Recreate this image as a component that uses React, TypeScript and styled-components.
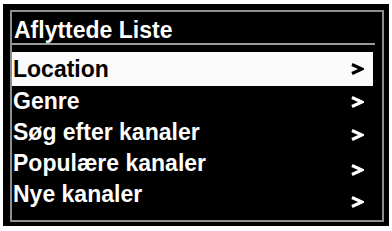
import React from 'react';
import styled, { createGlobalStyle } from 'styled-components';

const GlobalStyle = createGlobalStyle`
  html, body {
    margin: 0;
    padding: 0;
    background: #ffffff;
  }
  body {
    font-family: "Liberation Sans", Arial, sans-serif;
  }
`;

const Screen = styled.div`
  box-sizing: border-box;
  width: 386px;
  height: 222px;
  margin: 4px 0 0 3px;
  padding: 6px 5px 4px 7px;
  background: #000;
`;

const Panel = styled.div`
  box-sizing: border-box;
  height: 100%;
  border: 2px solid #8e8e8e;
  display: flex;
  flex-direction: column;
`;

const Header = styled.div`
  box-sizing: border-box;
  height: 30px;
  padding: 3px 0 0 2px;
  display: flex;
  align-items: flex-end;
  color: #fff;
  font-size: 23px;
  font-weight: bold;
  line-height: 1;
`;

const Divider = styled.div`
  height: 2px;
  background: #9a9a9a;
  margin: 1px 7px 7px 0;
`;

const List = styled.div`
  display: flex;
  flex-direction: column;
  margin-right: 9px;
`;

const Row = styled.div<{ $selected?: boolean; $h: number }>`
  height: ${(p) => p.$h}px;
  display: flex;
  align-items: center;
  justify-content: space-between;
  padding: 0 9px 0 1px;
  background: ${(p) => (p.$selected ? '#fbfbfb' : '#000')};
  color: ${(p) => (p.$selected ? '#000' : '#fff')};
  font-size: 23px;
  font-weight: bold;
`;

const Label = styled.span`
  line-height: 1;
`;

const Arrow = styled.svg<{ $drop: number }>`
  width: 14px;
  height: 14px;
  margin-top: ${(p) => p.$drop * 2}px;
  color: inherit;
`;

const Chevron = ({ drop }: { drop: number }) => (
  <Arrow $drop={drop} viewBox="0 0 14 14">
    <path
      d="M2 2.5 L12 7 L2 11.5"
      fill="none"
      stroke="currentColor"
      strokeWidth="3.2"
      strokeLinejoin="miter"
      strokeLinecap="butt"
    />
  </Arrow>
);

const items = [
  { label: 'Location', h: 34, drop: 0 },
  { label: 'Genre', h: 31, drop: 0 },
  { label: 'Søg efter kanaler', h: 31, drop: 2 },
  { label: 'Populære kanaler', h: 31, drop: 6 },
  { label: 'Nye kanaler', h: 31, drop: 7 },
];

export default function App() {
  return (
    <>
      <GlobalStyle />
      <Screen>
        <Panel>
          <Header>Aflyttede Liste</Header>
          <Divider />
          <List>
            {items.map((it, i) => (
              <Row key={it.label} $selected={i === 0} $h={it.h}>
                <Label>{it.label}</Label>
                <Chevron drop={it.drop} />
              </Row>
            ))}
          </List>
        </Panel>
      </Screen>
    </>
  );
}
